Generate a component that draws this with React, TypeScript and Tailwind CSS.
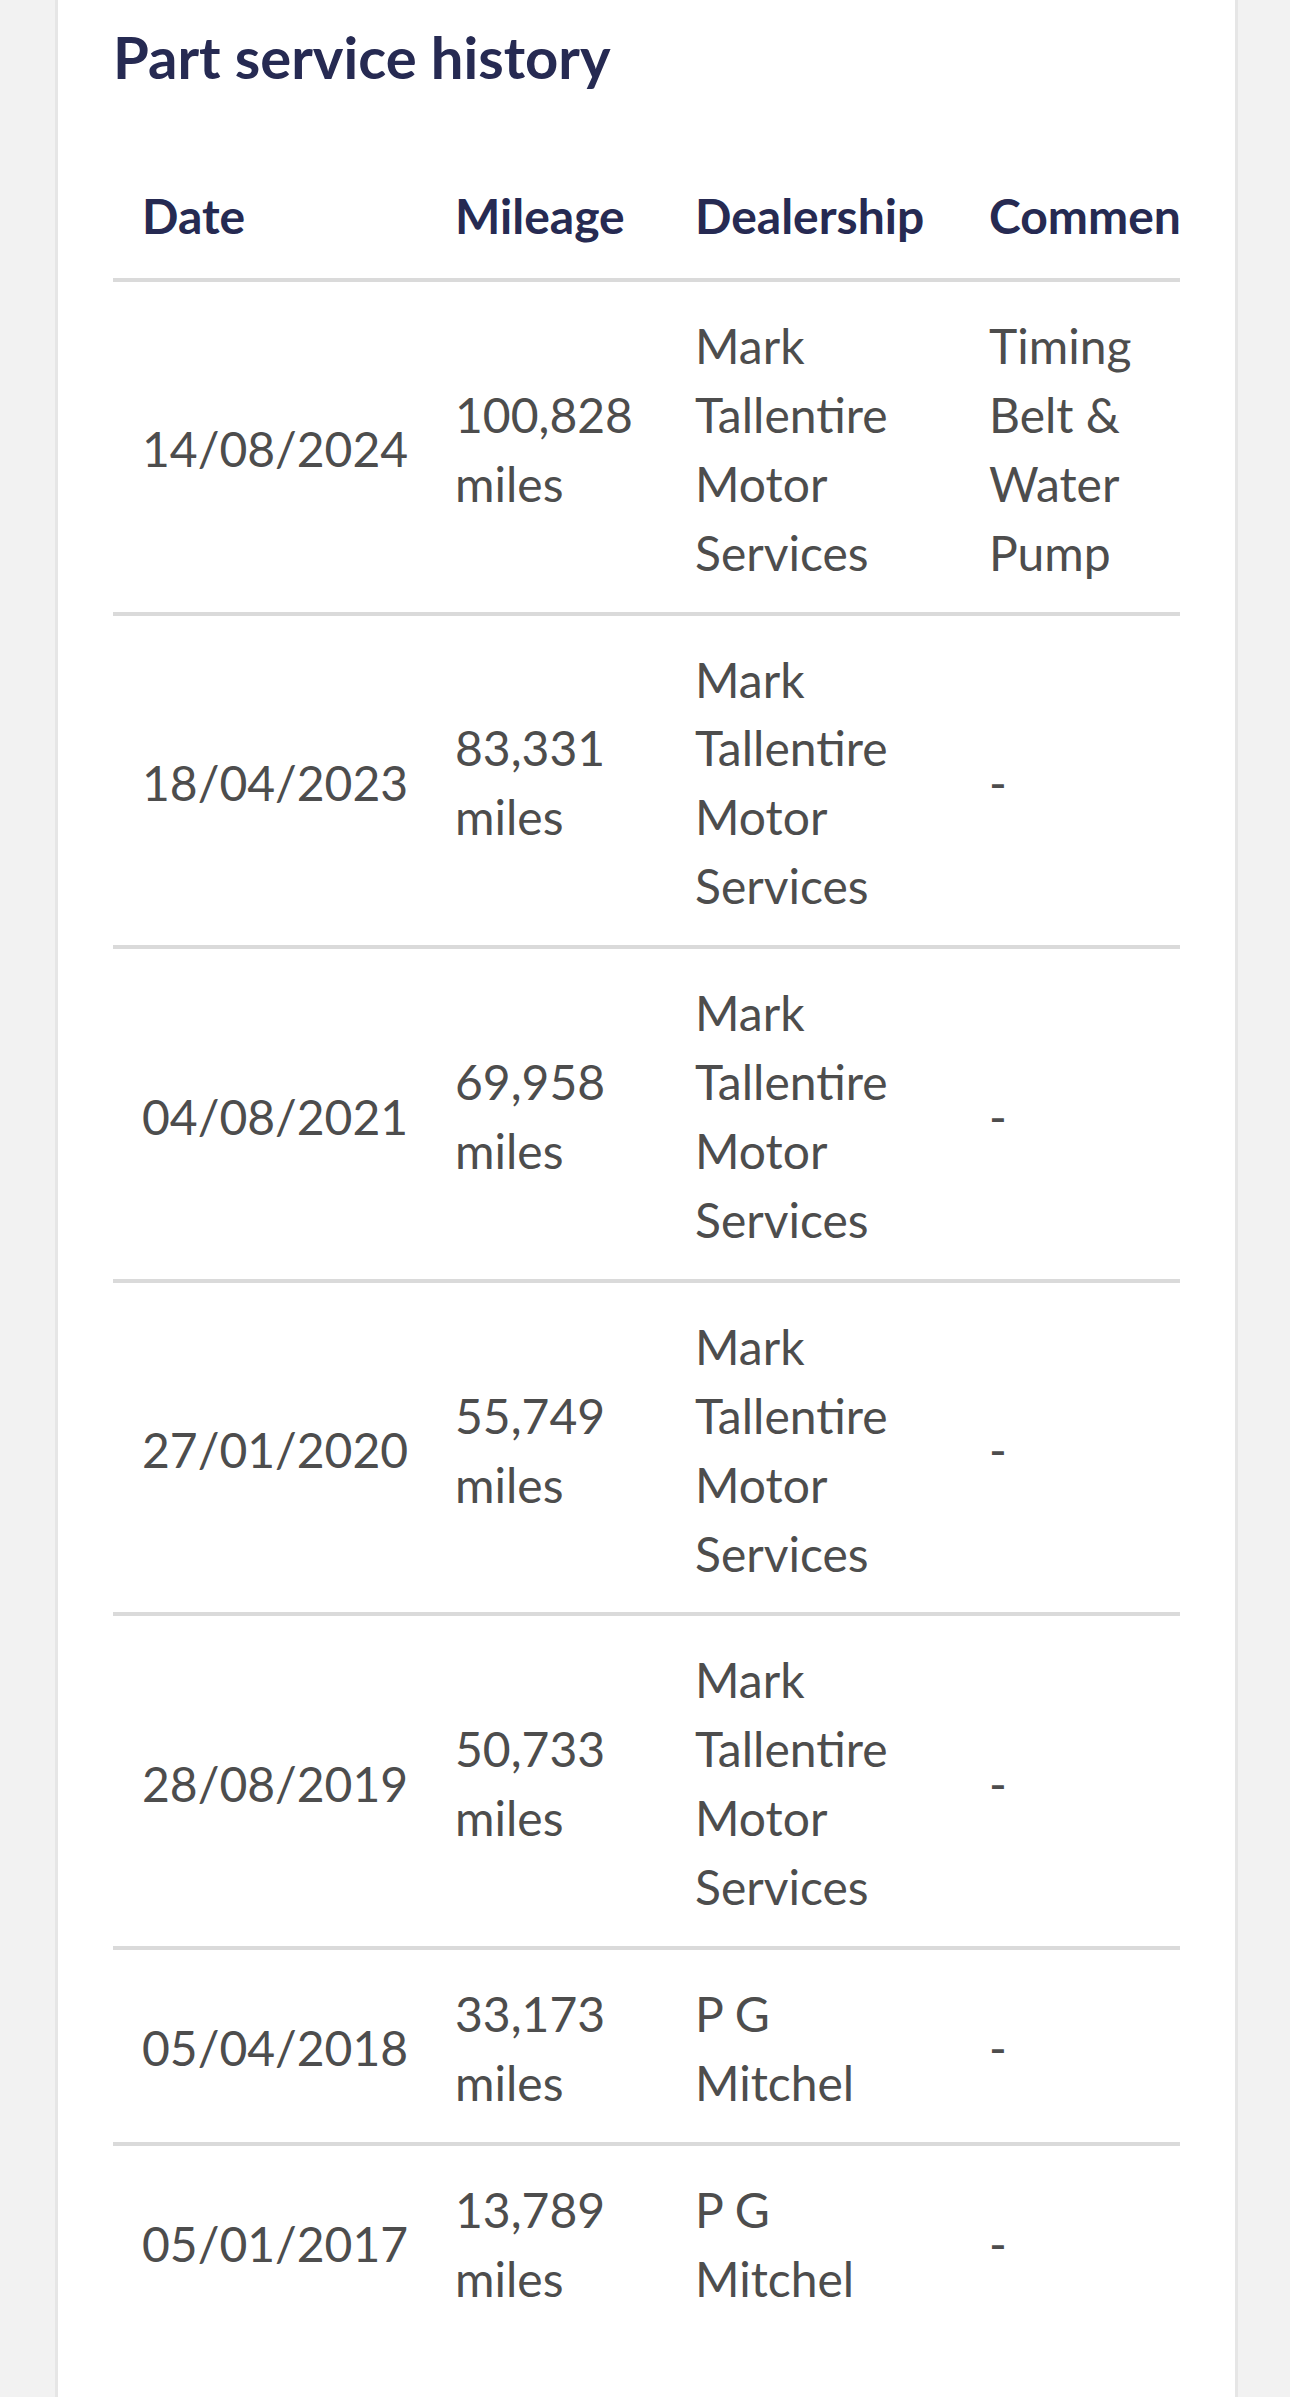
import React from "react";

type Row = { date: string; mileage: string; dealer: string; comment: string };

const rows: Row[] = [
  { date: "14/08/2024", mileage: "100,828 miles", dealer: "Mark Tallentire Motor Services", comment: "Timing Belt & Water Pump" },
  { date: "18/04/2023", mileage: "83,331 miles", dealer: "Mark Tallentire Motor Services", comment: "-" },
  { date: "04/08/2021", mileage: "69,958 miles", dealer: "Mark Tallentire Motor Services", comment: "-" },
  { date: "27/01/2020", mileage: "55,749 miles", dealer: "Mark Tallentire Motor Services", comment: "-" },
  { date: "28/08/2019", mileage: "50,733 miles", dealer: "Mark Tallentire Motor Services", comment: "-" },
  { date: "05/04/2018", mileage: "33,173 miles", dealer: "P G Mitchel", comment: "-" },
  { date: "05/01/2017", mileage: "13,789 miles", dealer: "P G Mitchel", comment: "-" },
];

export default function App() {
  return (
    <div
      className="min-h-[2397px] bg-[#f2f2f2] flex"
      style={{ fontFamily: "Lato, 'Open Sans', 'Noto Sans', sans-serif" }}
    >
      <div className="ml-[55px] w-[1183px] bg-white border-x-[3px] border-[#e6e6e6] px-[55px] pt-[22px]">
        <h2 className="text-[58px] leading-[69px] font-bold text-[#262a52] mb-[64px]">
          Part service history
        </h2>
        <div className="overflow-x-hidden w-full">
          <table className="table-fixed w-[1117px] border-collapse text-left text-[48px] leading-[68.9px]">
            <colgroup>
              <col className="w-[313px]" />
              <col className="w-[240px]" />
              <col className="w-[294px]" />
              <col className="w-[270px]" />
            </colgroup>
            <thead>
              <tr className="border-b-[4px] border-[#dadada]">
                <th className="pl-[29px] pr-[27px] py-[27px] font-bold text-[#262a52] whitespace-nowrap align-middle">Date</th>
                <th className="pl-[29px] pr-[27px] py-[27px] font-bold text-[#262a52] whitespace-nowrap align-middle">Mileage</th>
                <th className="pl-[29px] pr-[34px] py-[27px] font-bold text-[#262a52] whitespace-nowrap align-middle">Dealership</th>
                <th className="pl-[29px] pr-[27px] py-[27px] font-bold text-[#262a52] whitespace-nowrap align-middle">Comment</th>
              </tr>
            </thead>
            <tbody className="text-[#4d4d4d]">
              {rows.map((r, i) => (
                <tr key={i} className="border-b-[4px] border-[#dadada] last:border-b-0">
                  <td className="pl-[29px] pr-[20px] pt-[30px] pb-[24px] align-middle whitespace-nowrap">{r.date}</td>
                  <td className="pl-[29px] pr-[27px] pt-[30px] pb-[24px] align-middle">{r.mileage}</td>
                  <td className="pl-[29px] pr-[34px] pt-[30px] pb-[24px] align-middle">{r.dealer}</td>
                  <td className="pl-[29px] pr-[27px] pt-[30px] pb-[24px] align-middle">{r.comment}</td>
                </tr>
              ))}
            </tbody>
          </table>
        </div>
      </div>
    </div>
  );
}
